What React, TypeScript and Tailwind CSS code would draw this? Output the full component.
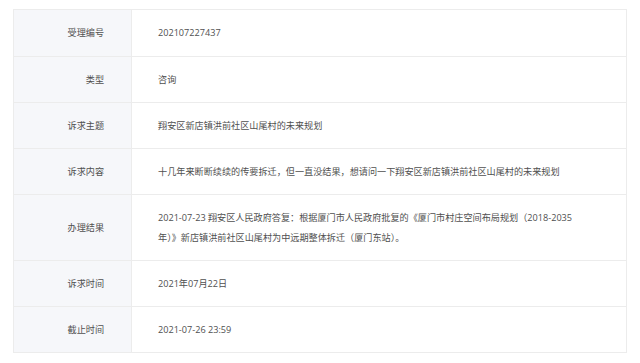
export default function App() {
  const rows: { label: string; value: React.ReactNode; tall?: boolean }[] = [
    { label: '受理编号', value: '202107227437' },
    { label: '类型', value: '咨询' },
    { label: '诉求主题', value: '翔安区新店镇洪前社区山尾村的未来规划' },
    {
      label: '诉求内容',
      value: '十几年来断断续续的传要拆迁，但一直没结果，想请问一下翔安区新店镇洪前社区山尾村的未来规划',
    },
    {
      label: '办理结果',
      value: '2021-07-23 翔安区人民政府答复：根据厦门市人民政府批复的《厦门市村庄空间布局规划（2018-2035年）》新店镇洪前社区山尾村为中远期整体拆迁（厦门东站）。',
      tall: true,
    },
    { label: '诉求时间', value: '2021年07月22日' },
    { label: '截止时间', value: '2021-07-26 23:59' },
  ]

  return (
    <div className="h-[363px] w-[640px] bg-white pl-[13px] pt-[9px] font-['Open_Sans','Noto_Sans_CJK_SC',sans-serif] text-[9.15px] text-[#505050]">
      <div className="w-[614px] border border-[#ececec]">
        {rows.map((row, i) => (
          <div
            key={row.label}
            className={`grid grid-cols-[118px_1fr] ${i > 0 ? 'border-t border-[#ececec]' : ''} ${row.tall ? 'h-[66px]' : 'h-[46px]'}`}
          >
            <div className="flex items-center justify-end border-r border-[#ececec] bg-[#f6f7fa] pr-[27px]">
              {row.label}
            </div>
            <div className="flex items-center pl-[26px] pr-[44px] leading-[19.5px]">
              <span>{row.value}</span>
            </div>
          </div>
        ))}
      </div>
    </div>
  )
}
